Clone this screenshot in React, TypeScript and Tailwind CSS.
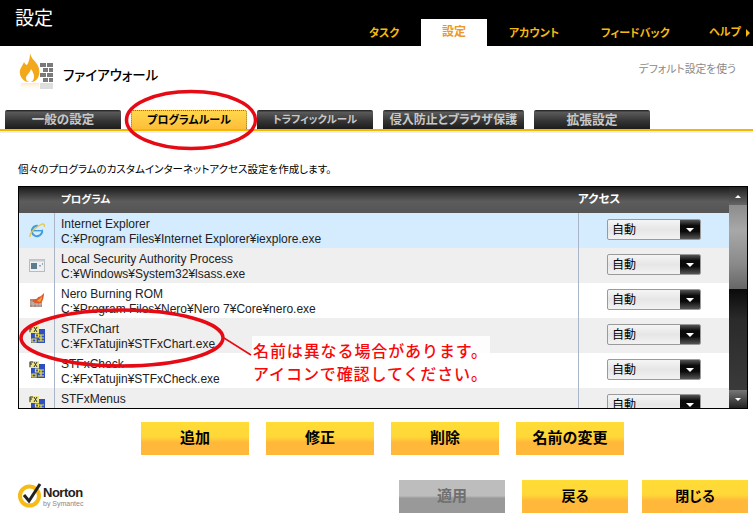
import React from "react";

const jp = "font-['Liberation_Sans','Noto_Sans_CJK_JP',sans-serif] [font-feature-settings:'palt']";

function FlameIcon() {
  return (
    <svg width="36" height="40" viewBox="0 0 36 40" className="shrink-0">
      <defs>
        <linearGradient id="fade" x1="0" y1="0" x2="0" y2="1">
          <stop offset="0" stopColor="#f3a71a" stopOpacity="0.25" />
          <stop offset="1" stopColor="#ffffff" stopOpacity="0" />
        </linearGradient>
      </defs>
      <g fill="#7a7a7a">
        <rect x="21" y="11" width="6" height="4" /><rect x="28" y="11" width="6" height="4" />
        <rect x="24" y="16" width="5" height="4" /><rect x="30" y="16" width="4" height="4" />
        <rect x="21" y="21" width="6" height="4" /><rect x="28" y="21" width="6" height="4" />
        <rect x="24" y="26" width="5" height="4" /><rect x="30" y="26" width="4" height="4" />
      </g>
      <rect x="21" y="31" width="13" height="6" fill="#dddddd" />
      <path d="M11 1 C12 7 17 9 19 14 C22 20 20 29 13 30 L9 30 C3 29 0 23 1 18 C2 15 4 13 5 10 C6 12 7 13 8 13 C10 10 11 6 11 1 Z" fill="#f3a71a" />
      <path d="M12 17 C14 20 15 22 15 25 C15 28 13 30 11 30 C8 30 7 28 7 26 C7 23 11 21 12 17 Z" fill="#ffffff" />
      <rect x="2" y="31" width="18" height="8" fill="url(#fade)" />
    </svg>
  );
}

function IeIcon() {
  return (
    <svg width="16" height="18" viewBox="0 0 16 18">
      <circle cx="8" cy="9" r="5.2" fill="none" stroke="#3d9be0" strokeWidth="2" strokeDasharray="26 6" transform="rotate(-15 8 9)" />
      <rect x="4" y="8" width="8" height="1.4" fill="#3d9be0" />
      <path d="M1 15 C0 12 6 5 13 2 C15 1.5 16 3 15 5" fill="none" stroke="#e8c43a" strokeWidth="1.2" />
    </svg>
  );
}

function LsassIcon() {
  return (
    <svg width="16" height="14" viewBox="0 0 16 14">
      <rect x="0.5" y="0.5" width="15" height="12" fill="#f0f0f0" stroke="#b5bcc4" />
      <rect x="0.5" y="0.5" width="15" height="2" fill="#c5cbd3" />
      <rect x="2" y="4" width="6" height="6" fill="#5c7c90" />
      <rect x="10" y="6" width="2" height="1.5" fill="#9aa7b2" />
      <rect x="13" y="4" width="1" height="2" fill="#9aa7b2" />
    </svg>
  );
}

function NeroIcon() {
  return (
    <svg width="16" height="15" viewBox="0 0 16 15">
      <rect x="1" y="6" width="12" height="8" fill="#a58c82" />
      <g stroke="#d8d0cb" strokeWidth="0.6">
        <path d="M1 9h12M1 11h12M4 7v7M8 7v7M11 7v7" />
      </g>
      <path d="M3 8 C6 5 8 7 9 4 C11 4 12 3 15 0 C15 3 14 8 12 10 C9 11 5 10 3 8 Z" fill="#e0592a" />
      <path d="M8 8 C10 6 11 6 13 3 C13 6 12 8 11 9 Z" fill="#f0a040" />
    </svg>
  );
}

function FxIcon() {
  return (
    <svg width="16" height="17" viewBox="0 0 16 17" className="mt-[-2px]">
      <rect x="2" y="3" width="14" height="14" fill="#2f4ec0" />
      <rect x="0" y="0" width="10" height="7" fill="#ece58a" />
      <path d="M1 1h3M1 1v5M1 3h2M5 1l3 5M8 1l-3 5" stroke="#333" strokeWidth="1" fill="none" />
      <path d="M6.5 8h3v3h-3zM3 13h4v3h-4zM10 9h5M10 12h5M12 9v6M9 15h6" stroke="#f2e23c" strokeWidth="1.2" fill="none" />
    </svg>
  );
}

const rows = [
  { name: "Internet Explorer", path: "C:¥Program Files¥Internet Explorer¥iexplore.exe", icon: <IeIcon />, bg: "bg-[#d4ecfd]" },
  { name: "Local Security Authority Process", path: "C:¥Windows¥System32¥lsass.exe", icon: <LsassIcon />, bg: "bg-[#efefef]" },
  { name: "Nero Burning ROM", path: "C:¥Program Files¥Nero¥Nero 7¥Core¥nero.exe", icon: <NeroIcon />, bg: "bg-white" },
  { name: "STFxChart", path: "C:¥FxTatujin¥STFxChart.exe", icon: <FxIcon />, bg: "bg-[#efefef]" },
  { name: "STFxCheck", path: "C:¥FxTatujin¥STFxCheck.exe", icon: <FxIcon />, bg: "bg-white" },
  { name: "STFxMenus", path: "", icon: <FxIcon />, bg: "bg-[#efefef]" },
];

const tabs = [
  { label: "一般の設定", w: "w-[116px]", size: "text-[12.5px]", active: false },
  { label: "プログラムルール", w: "w-[116px]", size: "text-[11px]", active: true },
  { label: "トラフィックルール", w: "w-[116px]", size: "text-[10.5px]", active: false },
  { label: "侵入防止とブラウザ保護", w: "w-[141px]", size: "text-[12px]", active: false },
  { label: "拡張設定", w: "w-[116px]", size: "text-[12.75px]", active: false },
];

function YellowButton({ label, w, cls }: { label: string; w: string; cls: string }) {
  return (
    <button className={`${w} ${cls} h-[33px] bg-[linear-gradient(#ffdc36_0%,#ffd838_45%,#ffb83a_62%,#ffb83a_100%)] font-bold text-black`}>
      {label}
    </button>
  );
}

const topBtn = "text-[15px] [font-feature-settings:normal]";

function Select() {
  return (
    <div className="flex h-[21px] w-[94px] overflow-hidden rounded-[2px] border border-[#9a9a9a] bg-[linear-gradient(#f5f5f5,#e6e6e6_50%,#f2f2f2)]">
      <span className="flex-1 pl-[4px] text-[12px] leading-[20px] text-black">自動</span>
      <span className="flex w-[20px] items-center justify-center bg-[linear-gradient(#555,#0a0a0a_30%,#0a0a0a_60%,#555)]">
        <span className="h-0 w-0 border-x-[4px] border-t-[4px] border-x-transparent border-t-white" />
      </span>
    </div>
  );
}

export default function App() {
  return (
    <div className={`relative h-[517px] w-[753px] overflow-hidden bg-white ${jp}`}>
      <header className="flex h-[46px] bg-black">
        <h1 className="w-[369px] pl-[15px] pt-[6px] text-[19px] font-normal leading-[26px] text-white">設定</h1>
        <nav className="flex items-end text-[11px] font-bold text-[#f7b90f]">
          <span className="h-[26px] w-[29px] whitespace-nowrap leading-[27px]">タスク</span>
          <span className="ml-[23px] h-[27px] w-[66px] bg-white text-center text-[12px] leading-[27px] text-[#ea982a]">設定</span>
          <span className="ml-[22px] h-[26px] w-[50px] whitespace-nowrap leading-[27px]">アカウント</span>
          <span className="ml-[42px] h-[26px] w-[67px] whitespace-nowrap leading-[27px]">フィードバック</span>
          <span className="ml-[41px] flex h-[27px] items-center gap-[5px] whitespace-nowrap">
            ヘルプ
            <span className="h-0 w-0 border-y-[4px] border-l-[4px] border-y-transparent border-l-[#f7b90f]" />
          </span>
        </nav>
      </header>

      <section className="flex h-[64px] items-start justify-between pl-[19px] pr-[17px]">
        <div className="mt-[6px] flex items-center gap-[8px]">
          <FlameIcon />
          <span className="mt-[8px] text-[13.5px] font-medium text-black">ファイアウォール</span>
        </div>
        <span className="mt-[15px] whitespace-nowrap text-[10.8px] text-[#8a8a8a]">デフォルト設定を使う</span>
      </section>

      <div className="flex h-[19px] gap-[10px] pl-[5px]">
        {tabs.map((t) => (
          <div
            key={t.label}
            className={`${t.w} ${t.size} flex items-center justify-center whitespace-nowrap rounded-t-[2px] pt-[1px] font-bold ${
              t.active
                ? "border-x border-t border-dotted border-[#777] bg-[linear-gradient(#ffd84a,#ffbd3a)] text-black"
                : "bg-[linear-gradient(#1e1e1e_0%,#5a5a5a_12%,#333_60%,#1c1c1c_100%)] text-[#c8c8c8]"
            }`}
          >
            {t.label}
          </div>
        ))}
      </div>
      <div className="h-[2px] bg-[#f5b800]" />
      <div className="h-[2px] bg-[#eeeeee]" />

      <p className="mt-[28px] h-[24px] whitespace-nowrap pl-[18px] text-[10.5px] leading-[16px] text-black">
        個々のプログラムのカスタムインターネットアクセス設定を作成します。
      </p>

      <div className="ml-[18px] mr-[5px] mt-[1px] flex h-[223px] overflow-hidden border-y border-black">
        <div className="flex flex-1 flex-col overflow-hidden border-l border-black">
          <div className="flex h-[26px] shrink-0 items-center bg-[linear-gradient(#1c1c1c,#5c5c5c_55%,#555)] font-bold text-white">
            <span className="w-[42px]" />
            <span className="flex-1 text-[10.5px]">プログラム</span>
            <span className="w-[151px] text-[11.5px]">アクセス</span>
          </div>
          {rows.map((r) => (
            <div key={r.name} className={`flex h-[35px] shrink-0 ${r.bg}`}>
              <div className="flex w-[35px] items-center justify-center">{r.icon}</div>
              <div className="flex-1 border-l border-[#a9b6c9] pl-[6px] pt-[4px] text-[12px] leading-[15px] text-[#222]">
                <div>{r.name}</div>
                {r.path && <div className="whitespace-nowrap">{r.path}</div>}
              </div>
              <div className="flex w-[151px] justify-center border-l border-[#a9b6c9] pt-[6px]">
                <Select />
              </div>
            </div>
          ))}
        </div>
        <div className="flex w-[19px] shrink-0 flex-col border-r border-black">
          <div className="flex h-[18px] items-center justify-center bg-[linear-gradient(#222,#666)]">
            <span className="h-0 w-0 border-x-[3px] border-b-[3px] border-x-transparent border-b-white" />
          </div>
          <div className="h-[84px] bg-[linear-gradient(#8c8c8c,#a8a8a8_30%,#8a8a8a_70%,#666)]" />
          <div className="flex-1 bg-[linear-gradient(#0a0a0a,#2a2a2a_30%,#3a3a3a)]" />
          <div className="flex h-[18px] items-center justify-center bg-[linear-gradient(#777,#222)]">
            <span className="h-0 w-0 border-x-[3px] border-t-[3px] border-x-transparent border-t-white" />
          </div>
        </div>
      </div>

      <div className="mt-[13px] flex gap-[17px] pl-[141px]">
        <YellowButton label="追加" w="w-[108px]" cls={topBtn} />
        <YellowButton label="修正" w="w-[108px]" cls={topBtn} />
        <YellowButton label="削除" w="w-[108px]" cls={topBtn} />
        <YellowButton label="名前の変更" w="w-[108px]" cls={topBtn} />
      </div>

      <footer className="mt-[25px] flex items-start pl-[18px]">
        <div className="flex w-[65px] items-start">
          <svg width="25" height="27" viewBox="0 0 25 27" className="mt-[1px] shrink-0">
            <circle cx="11.5" cy="15" r="9.5" fill="none" stroke="#f7bb16" strokeWidth="4" />
            <path d="M6 14 L11 20 L22 3" fill="none" stroke="#222" strokeWidth="3" />
          </svg>
          <div className="mt-[6px] flex flex-col">
            <span className="font-['Liberation_Sans',sans-serif] text-[13px] font-bold leading-[14px] tracking-[-0.5px] text-[#222]">Norton</span>
            <span className="whitespace-nowrap font-['Liberation_Sans',sans-serif] text-[7px] leading-[8px] text-[#888]">by Symantec</span>
          </div>
        </div>
        <button className="ml-[316px] h-[33px] w-[106px] bg-[linear-gradient(#bdbdbd_0%,#bdbdbd_48%,#999_55%,#999_100%)] text-[15px] font-bold text-[#6f6f6f]">
          適用
        </button>
        <div className="ml-[17px]"><YellowButton label="戻る" w="w-[106px]" cls="text-[14px]" /></div>
        <div className="ml-[14px]"><YellowButton label="閉じる" w="w-[106px]" cls="text-[14px]" /></div>
      </footer>

      {/* annotations drawn over the screenshot */}
      <svg width="753" height="517" className="pointer-events-none absolute left-0 top-0">
        <ellipse cx="191" cy="120" rx="64.5" ry="28.5" fill="none" stroke="#e60a14" strokeWidth="3.5" />
        <ellipse cx="122" cy="338" rx="101" ry="28" fill="none" stroke="#e60a14" strokeWidth="3.5" />
        <path d="M224 338 L251 355" stroke="#e60a14" strokeWidth="1.5" />
      </svg>
      <div className="absolute left-[252px] top-[336px] h-[50px] w-[238px] bg-white/90 pl-[1px] pt-[4px] text-[16px] font-medium leading-[23px] tracking-[0.9px] text-[#f80808] [font-feature-settings:normal]">
        <div className="whitespace-nowrap">名前は異なる場合があります。</div>
        <div className="whitespace-nowrap">アイコンで確認してください。</div>
      </div>
    </div>
  );
}
